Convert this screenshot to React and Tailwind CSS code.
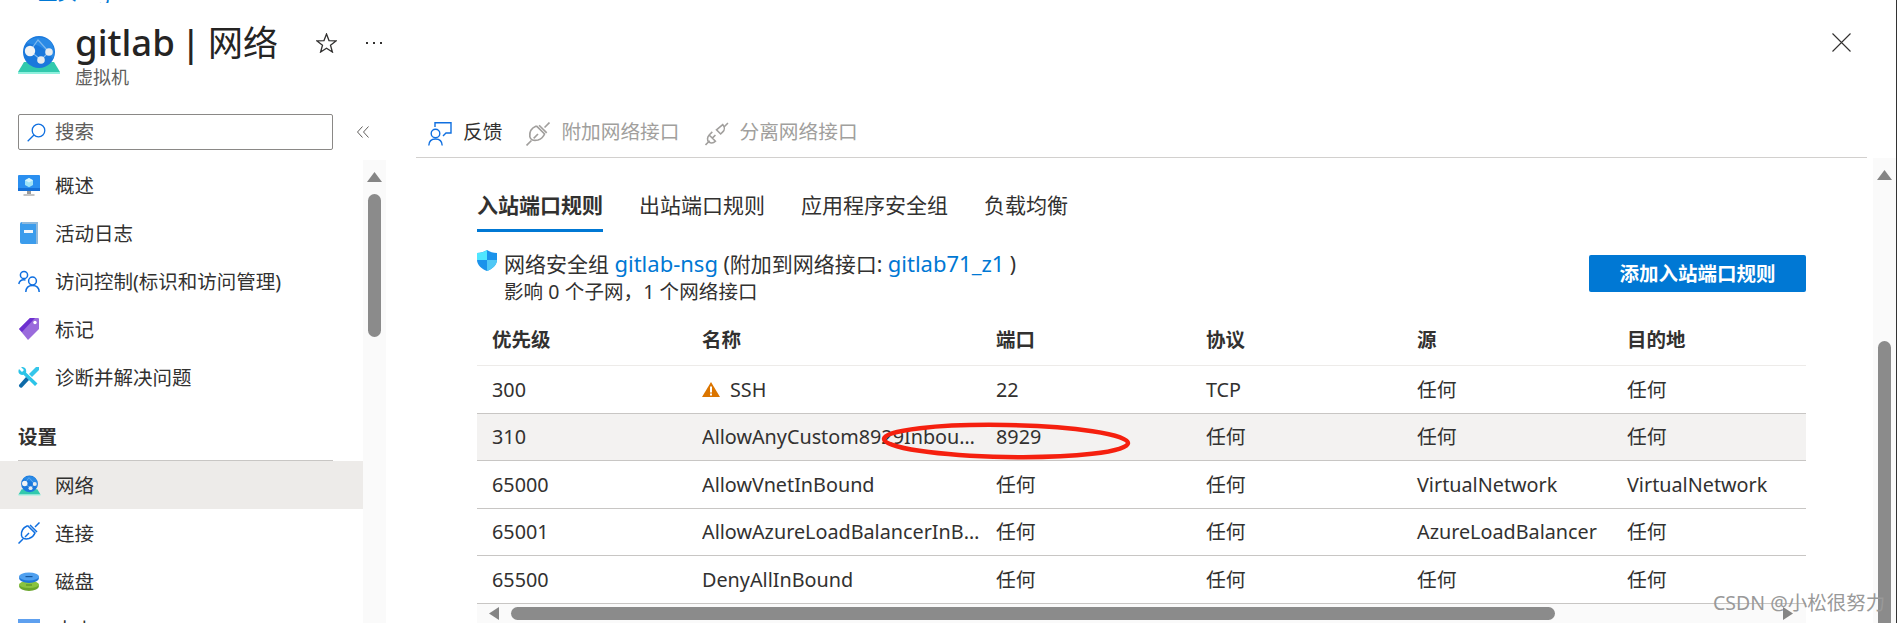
import React from 'react';

function GlobeIcon({ className }) {
  return (
    <svg className={className} viewBox="0 0 42 40" fill="none">
      <path d="M6 27 L36 27 L42 37 L0 37 Z" fill="#32c9ad" />
      <rect x="0" y="37" width="42" height="2" fill="#8ff0dd" />
      <circle cx="21" cy="17" r="16" fill="#1a78dc" />
      <path d="M8 8 C15 1 26 1 33 7 C36 12 37 18 35 24 C31 18 27 14 21 11 C16 9 11 9 8 8 Z" fill="#2a8ae6" />
      <path d="M12 16 L20 5 C24 9 27 13 31 17 L23 25 Z" stroke="#7db8ee" strokeWidth="1.2" />
      <circle cx="12" cy="16" r="5.2" fill="#f1f3f5" />
      <circle cx="31" cy="17" r="3.8" fill="#e6ebef" />
      <circle cx="23" cy="25" r="3.8" fill="#e6ebef" />
    </svg>
  );
}

function MonitorIcon({ className }) {
  return (
    <svg className={className} viewBox="0 0 22 21">
      <rect x="0" y="0" width="22" height="16" rx="1" fill="#2a8ff0" />
      <rect x="0" y="13" width="22" height="3" fill="#1570d8" />
      <path d="M11 3 L15 5.2 V10 L11 12.2 L7 10 V5.2 Z" fill="#9fe3f7" />
      <path d="M7 5.2 L11 7.4 L15 5.2 L11 3 Z" fill="#d7f5fd" />
      <rect x="9" y="16" width="4" height="3" fill="#9a9a9a" />
      <rect x="5.5" y="19" width="11" height="2" fill="#c4c4c4" />
    </svg>
  );
}

function BookIcon({ className }) {
  return (
    <svg className={className} viewBox="0 0 18 22">
      <path d="M2 0 H18 V22 H2 A2 2 0 0 1 0 20 V2 A2 2 0 0 1 2 0 Z" fill="#3b9cec" />
      <path d="M2 0 H18 V22 H16 V2 H2 Z" fill="#8fb9dc" />
      <rect x="4" y="8" width="9" height="3" fill="#f3f7fb" />
    </svg>
  );
}

function UsersIcon({ className }) {
  return (
    <svg className={className} viewBox="0 0 22 22" fill="none" stroke="#0f6fe0" strokeWidth="1.5">
      <circle cx="6" cy="5" r="3.6" />
      <path d="M0.8 14 C1.5 10.5 4 9.4 7.5 10" />
      <circle cx="14.5" cy="11" r="3.9" />
      <path d="M7.8 22 C8 17.5 11 15.6 14.5 15.6 C18 15.6 21 17.5 21.2 22" />
    </svg>
  );
}

function TagIcon({ className }) {
  return (
    <svg className={className} viewBox="0 0 20 22">
      <path d="M0 11 L11 0 H19 A1 1 0 0 1 20 1 V11 L9 22 Z" fill="#9a6bdc" />
      <path d="M0 11 L11 0 H16 L3 14 Z" fill="#6d2fd0" />
      <circle cx="16" cy="4.5" r="1.7" fill="#fff" />
    </svg>
  );
}

function ToolsIcon({ className }) {
  return (
    <svg className={className} viewBox="0 0 21 21">
      <path d="M3 0 L6 3 L4 5 L1 2 C-0.5 5 1 8 4 8 L5.5 7.8 L17 19 L19.5 16.5 L8 5.5 C9 2 6.5 -0.5 3 0 Z" fill="#2cc4e8" />
      <path d="M21 0 L18 0 L11 7 L14 10 L21 3 Z" fill="#35c6ea" />
      <path d="M8 10 L11 13 L4 20.5 C2.5 21.5 0.5 20 1 18 Z" fill="#0e6aa8" />
    </svg>
  );
}

function PlugIcon({ className, color }) {
  return (
    <svg className={className} viewBox="0 0 22 22" fill="none" stroke={color} strokeWidth="1.5">
      <path d="M0.5 21.5 L5 17 M17 5 L21.5 0.5 M12 3 L19 10" />
      <path d="M9 5 C5.5 6.5 3 10 3.5 14.5 C4 17.5 7 18.5 11 17.5 C14 16.5 16 14.5 17 12 L10 5 Z" transform="translate(0 -1)" />
      <path d="M7 15 L11 11" />
    </svg>
  );
}

function DetachIcon({ className }) {
  return (
    <svg className={className} viewBox="0 0 23 22" fill="none" stroke="#a19f9d" strokeWidth="1.5">
      <path d="M0.5 21.5 L4.5 17.5 M18 4.5 L22 0.5" />
      <path d="M4 12 L10 18 C8 20 5.5 20 3.5 18.5 C2 17 2 14 4 12 Z M7 9 L4 12 M10 12 L7 15" />
      <path d="M12 10 L18 5 C20 7 20 10 18 12 L16 14 Z" transform="translate(-1 -3)" />
    </svg>
  );
}

function DiskIcon({ className }) {
  return (
    <svg className={className} viewBox="0 0 20 19">
      <ellipse cx="10" cy="14" rx="10" ry="5" fill="#6aa52b" />
      <ellipse cx="10" cy="12.5" rx="10" ry="3.5" fill="#8ac33f" />
      <rect x="7" y="12.5" width="6" height="1" fill="#4f8a1c" />
      <ellipse cx="10" cy="6" rx="10" ry="5" fill="#1f78d8" />
      <ellipse cx="10" cy="4.5" rx="10" ry="4" fill="#4fa0ef" />
      <rect x="6.5" y="4" width="7" height="1.2" fill="#14559c" />
    </svg>
  );
}

function SizeIcon({ className }) {
  return (
    <svg className={className} viewBox="0 0 22 20">
      <rect width="22" height="20" fill="#5ea0ef" />
    </svg>
  );
}

function ShieldIcon({ className }) {
  return (
    <svg className={className} viewBox="0 0 20 21">
      <path d="M10 0 C13 2 16 3 20 3 V10 C20 15 15 19 10 21 C5 19 0 15 0 10 V3 C4 3 7 2 10 0 Z" fill="#1b93eb" />
      <path d="M10 0 C7 2 4 3 0 3 V10 H10 Z" fill="#50e6ff" />
      <path d="M10 10 H20 C20 15 15 19 10 21 Z" fill="#50c8f5" />
    </svg>
  );
}

function WarningIcon({ className }) {
  return (
    <svg className={className} viewBox="0 0 18 15">
      <path d="M9 0 L18 15 H0 Z" fill="#db7500" />
      <rect x="8" y="4.5" width="2" height="6" fill="#fff" />
      <rect x="8" y="11.5" width="2" height="2" fill="#fff" />
    </svg>
  );
}

function ScrollArrow({ className, dir }) {
  const points = {
    up: '7.5,0 15,10 0,10',
    left: '0,6.5 10,0 10,13',
    right: '10,6.5 0,0 0,13',
  };
  const box = dir === 'up' ? '0 0 15 10' : '0 0 10 13';
  return (
    <svg className={className} viewBox={box}>
      <polygon points={points[dir]} fill="#858585" />
    </svg>
  );
}

const navTop = [
  { label: '概述', icon: <MonitorIcon className="w-[22px] h-[21px]" /> },
  { label: '活动日志', icon: <BookIcon className="w-[18px] h-[22px] ml-[2px] mr-[2px]" /> },
  { label: '访问控制(标识和访问管理)', icon: <UsersIcon className="w-[22px] h-[22px]" /> },
  { label: '标记', icon: <TagIcon className="w-[20px] h-[22px] ml-[1px] mr-[1px]" /> },
  { label: '诊断并解决问题', icon: <ToolsIcon className="w-[21px] h-[21px] mr-[1px]" /> },
];

const navSettings = [
  { label: '网络', icon: <GlobeIcon className="w-[23px] h-[21px] -mr-[1px]" />, active: true },
  { label: '连接', icon: <PlugIcon className="w-[22px] h-[22px]" color="#0f6fe0" /> },
  { label: '磁盘', icon: <DiskIcon className="w-[20px] h-[19px] ml-[1px] mr-[1px]" /> },
  { label: '大小', icon: <SizeIcon className="w-[22px] h-[20px]" /> },
];

const rules = [
  { priority: '300', name: 'SSH', port: '22', protocol: 'TCP', source: '任何', dest: '任何', warn: true },
  { priority: '310', name: 'AllowAnyCustom8929Inbound', port: '8929', protocol: '任何', source: '任何', dest: '任何', selected: true },
  { priority: '65000', name: 'AllowVnetInBound', port: '任何', protocol: '任何', source: 'VirtualNetwork', dest: 'VirtualNetwork' },
  { priority: '65001', name: 'AllowAzureLoadBalancerInBound', port: '任何', protocol: '任何', source: 'AzureLoadBalancer', dest: '任何' },
  { priority: '65500', name: 'DenyAllInBound', port: '任何', protocol: '任何', source: '任何', dest: '任何' },
];

const columns = 'grid grid-cols-[210px_294px_210px_211px_210px_1fr]';

function NavItem({ item }) {
  return (
    <div className={`h-[48px] flex items-center pl-[18px] ${item.active ? 'bg-[#edebe9]' : ''}`}>
      <span className="w-[37px] flex items-center shrink-0">{item.icon}</span>
      <span>{item.label}</span>
    </div>
  );
}

function App() {
  return (
    <div className="relative h-[623px] overflow-hidden bg-white flex flex-col border-r border-[#333333] text-[19.5px] leading-[27px] text-[#323130] font-['Noto_Sans','Noto_Sans_CJK_SC',sans-serif]">
      <div className="h-[3px] overflow-hidden pl-[38px] text-[#0078d4]">
        <div className="-mt-[21px] whitespace-nowrap">主页 &gt; gitlab</div>
      </div>

      <div className="h-[107px] shrink-0 flex pl-[18px] pr-[45px]">
        <GlobeIcon className="w-[42px] h-[40px] mt-[32px] shrink-0" />
        <div className="ml-[15px] mt-[17px]">
          <div className="flex items-baseline text-[36.5px] leading-[45px] font-medium text-[#252423] whitespace-nowrap">
            <span>gitlab</span>
            <span className="ml-[6px]">|</span>
            <span className="ml-[7px] text-[35px] font-normal">网络</span>
          </div>
          <div className="text-[18px] leading-[24px] text-[#605e5c]">虚拟机</div>
        </div>
        <svg className="w-[21px] h-[20px] ml-[38px] mt-[30px]" viewBox="0 0 21 20" fill="none" stroke="#323130" strokeWidth="1.3">
          <path d="M10.5 1 L13 7.6 L20 7.9 L14.5 12.3 L16.4 19 L10.5 15.2 L4.6 19 L6.5 12.3 L1 7.9 L8 7.6 Z" />
        </svg>
        <div className="ml-[29px] mt-[39px] flex gap-[5px] h-[2px]">
          <span className="w-[2px] h-[2px] bg-[#323130]" />
          <span className="w-[2px] h-[2px] bg-[#323130]" />
          <span className="w-[2px] h-[2px] bg-[#323130]" />
        </div>
        <svg className="w-[19px] h-[19px] ml-auto mt-[30px]" viewBox="0 0 19 19" fill="none" stroke="#323130" strokeWidth="1.1">
          <path d="M0.5 0.5 L18.5 18.5 M18.5 0.5 L0.5 18.5" />
        </svg>
      </div>

      <div className="flex-1 flex min-h-0">
        <aside className="w-[386px] shrink-0 flex flex-col">
          <div className="h-[50px] shrink-0 flex items-start pl-[18px] pt-[4px]">
            <div className="w-[315px] h-[36px] border border-[#8a8886] rounded-[2px] flex items-center pl-[8px]">
              <svg className="w-[19px] h-[19px]" viewBox="0 0 19 19" fill="none" stroke="#0f6fe0" strokeWidth="1.3">
                <circle cx="11.5" cy="7.5" r="6.3" />
                <path d="M7 12 L0.7 18.3" />
              </svg>
              <span className="ml-[9px] pb-[2px] text-[#605e5c]">搜索</span>
            </div>
            <svg className="w-[12px] h-[12px] ml-[24px] mt-[12px]" viewBox="0 0 12 12" fill="none" stroke="#605e5c" strokeWidth="1">
              <path d="M5.5 0.5 L0.5 6 L5.5 11.5 M11.5 0.5 L6.5 6 L11.5 11.5" />
            </svg>
          </div>
          <div className="flex-1 flex min-h-0">
            <nav className="w-[363px] shrink-0 overflow-hidden">
              <div className="h-[1px]" />
              {navTop.map((item) => (
                <NavItem key={item.label} item={item} />
              ))}
              <div className="h-[60px] ml-[18px] mr-[30px] border-b border-[#c8c6c4] flex items-end pb-[10px] font-semibold">设置</div>
              {navSettings.map((item) => (
                <NavItem key={item.label} item={item} />
              ))}
            </nav>
            <div className="w-[23px] bg-[#fafafa] flex flex-col items-center">
              <ScrollArrow className="w-[15px] h-[10px] mt-[12px]" dir="up" />
              <div className="w-[13px] h-[143px] mt-[12px] rounded-[7px] bg-[#8b8b8b]" />
            </div>
          </div>
        </aside>

        <main className="flex-1 min-w-0 flex flex-col">
          <div className="h-[48px] shrink-0 ml-[30px] mr-[29px] border-b border-[#d2d0ce] flex items-center pl-[12px] text-[19.7px]">
            <svg className="w-[24px] h-[24px]" viewBox="0 0 24 24" fill="none" stroke="#0f6fe0" strokeWidth="1.4">
              <path d="M7 5 V0.8 H23 V11 H18 L15 14" />
              <circle cx="7.5" cy="11.5" r="4.3" />
              <path d="M0.8 23.5 C1 19 4 17 7.5 17 C11 17 14 19 14.2 23.5" />
            </svg>
            <span className="ml-[11px] pb-[5px]">反馈</span>
            <PlugIcon className="w-[24px] h-[24px] ml-[24px]" color="#a19f9d" />
            <span className="ml-[11px] pb-[5px] text-[#a19f9d]">附加网络接口</span>
            <DetachIcon className="w-[24px] h-[24px] ml-[25px]" />
            <span className="ml-[11px] pb-[5px] text-[#a19f9d]">分离网络接口</span>
          </div>

          <div className="flex-1 flex min-h-0">
            <div className="flex-1 min-w-0 pl-[91px] pr-[67px]">
              <div className="h-[74px] flex items-end gap-[36px] text-[21px]">
                <div className="h-[40px] font-semibold border-b-[3px] border-[#0078d4]">入站端口规则</div>
                <div className="h-[40px]">出站端口规则</div>
                <div className="h-[40px]">应用程序安全组</div>
                <div className="h-[40px]">负载均衡</div>
              </div>

              <div className="mt-[18px] h-[66px] flex justify-between items-start">
                <div className="flex gap-[7px]">
                  <ShieldIcon className="w-[20px] h-[21px] shrink-0" />
                  <div>
                    <div className="text-[21px] whitespace-nowrap">
                      网络安全组 <span className="text-[22px] text-[#0078d4]">gitlab-nsg</span> (附加到网络接口: <span className="text-[22px] text-[#0078d4]">gitlab71_z1</span> )
                    </div>
                    <div className="whitespace-nowrap tracking-[0.1px]">影响 0 个子网，1 个网络接口</div>
                  </div>
                </div>
                <button className="w-[217px] h-[37px] mt-[5px] rounded-[2px] bg-[#0078d4] text-white font-semibold">
                  添加入站端口规则
                </button>
              </div>

              <div className={`${columns} h-[50px] items-center border-b border-[#edebe9] font-semibold`}>
                {['优先级', '名称', '端口', '协议', '源', '目的地'].map((title) => (
                  <div key={title} className="pl-[15px] pb-[2px]">{title}</div>
                ))}
              </div>

              {rules.map((rule) => (
                <div
                  key={rule.priority}
                  className={`${columns} h-[47.5px] items-center border-b border-[#c8c6c4] text-[19.8px] ${rule.selected ? 'bg-[#f3f2f1]' : ''}`}
                >
                  <div className="pl-[15px]">{rule.priority}</div>
                  <div className="pl-[15px] pr-[1px] flex items-center gap-[10px] min-w-0">
                    {rule.warn && <WarningIcon className="w-[18px] h-[15px] shrink-0" />}
                    <span className="truncate">{rule.name}</span>
                  </div>
                  <div className="pl-[15px]">{rule.port}</div>
                  <div className="pl-[15px]">{rule.protocol}</div>
                  <div className="pl-[15px]">{rule.source}</div>
                  <div className="pl-[15px]">{rule.dest}</div>
                </div>
              ))}

              <div className="h-[19px] bg-[#fafafa] flex items-center pl-[12px] pr-[13px]">
                <ScrollArrow className="w-[10px] h-[13px]" dir="left" />
                <div className="w-[1044px] h-[13px] ml-[12px] rounded-[7px] bg-[#8b8b8b]" />
                <ScrollArrow className="w-[10px] h-[13px] ml-auto" dir="right" />
              </div>
            </div>

            <div className="w-[23px] shrink-0 bg-[#fafafa] flex flex-col items-center">
              <ScrollArrow className="w-[15px] h-[10px] mt-[12px]" dir="up" />
              <div className="w-[13px] flex-1 mt-[161px] rounded-t-[7px] bg-[#8b8b8b]" />
            </div>
          </div>
        </main>
      </div>

      <svg className="absolute left-[880px] top-[420px] w-[252px] h-[42px]" viewBox="0 0 252 42" fill="none">
        <ellipse cx="126" cy="21" rx="122" ry="16" stroke="#f5200f" strokeWidth="4.5" transform="rotate(1 126 21)" />
      </svg>
      <div className="absolute left-[1713px] top-[591px] text-[19.5px] leading-[24px] text-[#999999] whitespace-nowrap">CSDN @小松很努力</div>
    </div>
  );
}

export default App;
